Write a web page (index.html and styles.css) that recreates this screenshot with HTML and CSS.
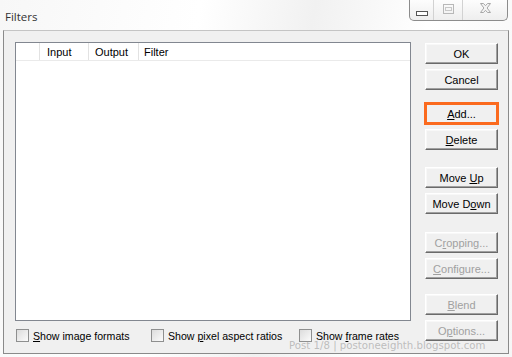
FILE: index.html
```html
<!DOCTYPE html>
<html lang="en">
  <head>
    <meta charset="UTF-8" />
    <title>Filters</title>
    <link rel="stylesheet" href="styles.css">
  </head>
  <body>
    <div class="titlebar">
      <div class="title">Filters</div>
      <div class="controls">
        <div class="ctl min">
          <svg width="12" height="6" viewBox="0 0 12 6"><rect x="0.5" y="0.5" width="11" height="4" fill="#fff" stroke="#555" /></svg>
        </div>
        <div class="ctl max">
          <svg width="11" height="10" viewBox="0 0 11 10"><rect x="0.5" y="0.5" width="10" height="9" fill="none" stroke="#b8b8b8" /><rect x="2.5" y="3.5" width="6" height="3" fill="none" stroke="#c8c8c8" /></svg>
        </div>
        <div class="ctl close">
          <svg width="11" height="10" viewBox="0 0 11 10"><path d="M0.5 0.5h3l2 2.2 2-2.2h3l-3.4 4.5 3.4 4.5h-3l-2-2.2-2 2.2h-3l3.4-4.5z" fill="#f4f4f4" stroke="#a8a8a8" /></svg>
        </div>
      </div>
    </div>

    <div class="dialog">
      <div class="main">
        <div class="list">
          <div class="list-head">
            <div class="col c0"></div>
            <div class="col c1">Input</div>
            <div class="col c2">Output</div>
            <div class="col c3">Filter</div>
          </div>
        </div>
        <div class="checks">
          <label class="check w1"><span class="box"></span><span><u>S</u>how image formats</span></label>
          <label class="check w2"><span class="box"></span><span>Show <u>p</u>ixel aspect ratios</span></label>
          <label class="check"><span class="box"></span><span>Show <u>f</u>rame rates</span></label>
        </div>
      </div>

      <div class="side">
        <div class="group">
          <button>OK</button>
          <button>Cancel</button>
        </div>
        <div class="group g2">
          <button class="focus"><u>A</u>dd...</button>
          <button><u>D</u>elete</button>
        </div>
        <div class="group g3">
          <button>Move <u>U</u>p</button>
          <button>Move D<u>o</u>wn</button>
        </div>
        <div class="group g4">
          <button class="off" disabled>C<u>r</u>opping...</button>
          <button class="off" disabled><u>C</u>onfigure...</button>
        </div>
        <div class="group g5">
          <button class="off" disabled><u>B</u>lend</button>
          <button class="off" disabled>O<u>p</u>tions...</button>
        </div>
      </div>
    </div>

    <div class="watermark">Post 1/8 | postoneeighth.blogspot.com</div>
  </body>
</html>
```

FILE: styles.css
```css
body {
  margin: 0;
  width: 512px;
  height: 357px;
  overflow: hidden;
  position: relative;
  font-family: "Liberation Sans", Arial, sans-serif;
  font-size: 11px;
  color: #000;
  background: linear-gradient(100deg, #f7f7f7 0%, #fff 35%, #f1f1f1 55%, #fff 75%, #f6f6f6 100%);
}
.titlebar {
  height: 30px;
  display: flex;
  justify-content: space-between;
}
.title {
  padding: 9px 0 0 5px;
  font-family: "Open Sans", "Noto Sans", sans-serif;
  font-size: 11.5px;
  color: #333;
}
.controls {
  display: flex;
  height: 20px;
  margin-right: 4px;
  border: 1px solid #8c8c8c;
  border-top: 0;
  border-radius: 0 0 5px 5px;
  background: linear-gradient(#fdfdfd, #eeeeee);
}
.ctl {
  display: flex;
  align-items: center;
  justify-content: center;
}
.min {
  width: 24px;
  border-right: 1px solid #d2d2d2;
  padding-top: 7px;
  box-sizing: border-box;
}
.max {
  width: 29px;
  border-right: 1px solid #d2d2d2;
  padding-bottom: 3px;
  box-sizing: border-box;
}
.close {
  width: 44px;
  padding-bottom: 4px;
  box-sizing: border-box;
}
.dialog {
  margin: 0 3px;
  height: 322px;
  display: flex;
  background: #f0f0f0;
  border: 1px solid #8a8a8a;
  border-top-color: #c4c4c4;
}
.main {
  padding: 11px 0 0 11px;
}
.list {
  width: 394px;
  height: 277px;
  background: #fff;
  border: 1px solid #828790;
}
.list-head {
  display: flex;
  height: 17px;
  border-bottom: 1px solid #eaeaea;
}
.col {
  line-height: 18px;
  padding-left: 7px;
  box-sizing: border-box;
  border-right: 1px solid #e2e2e2;
}
.c0 {
  width: 24px;
}
.c1 {
  width: 49px;
}
.c2 {
  width: 50px;
  padding-left: 6px;
}
.c3 {
  border-right: 0;
  padding-left: 5px;
}
.checks {
  display: flex;
  margin-top: 8px;
  padding-left: 1px;
  font-size: 10.6px;
}
.check {
  display: flex;
  align-items: center;
  gap: 4px;
  height: 13px;
}
.w1 {
  width: 135px;
}
.w2 {
  width: 148px;
}
.box {
  width: 11px;
  height: 11px;
  border: 1px solid #8e8f8f;
  background: linear-gradient(135deg, #dcdcdc, #fbfbfb);
  flex: none;
}
.side {
  margin-left: 14px;
  padding-top: 12px;
  width: 73px;
}
.group {
  display: flex;
  flex-direction: column;
  gap: 5px;
}
.g2 {
  margin-top: 13px;
}
.g3 {
  margin-top: 17px;
}
.g4 {
  margin-top: 18px;
}
.g5 {
  margin-top: 15px;
}
button {
  height: 21px;
  width: 73px;
  padding: 0;
  font-family: "Liberation Sans", Arial, sans-serif;
  font-size: 11px;
  color: #000;
  background: #f0f0f0;
  border: 1px solid;
  border-color: #fff #6a6a6a #6a6a6a #fff;
  box-shadow: inset -1px -1px #a0a0a0, inset 1px 1px #f8f8f8;
}
.focus {
  outline: 3px solid #fb6a1e;
  outline-offset: -2px;
}
.off {
  color: #a0a0a0;
}
.watermark {
  position: absolute;
  left: 289px;
  top: 340px;
  font-family: "DejaVu Sans", sans-serif;
  font-size: 10.2px;
  color: rgba(160, 160, 160, 0.65);
}
```
